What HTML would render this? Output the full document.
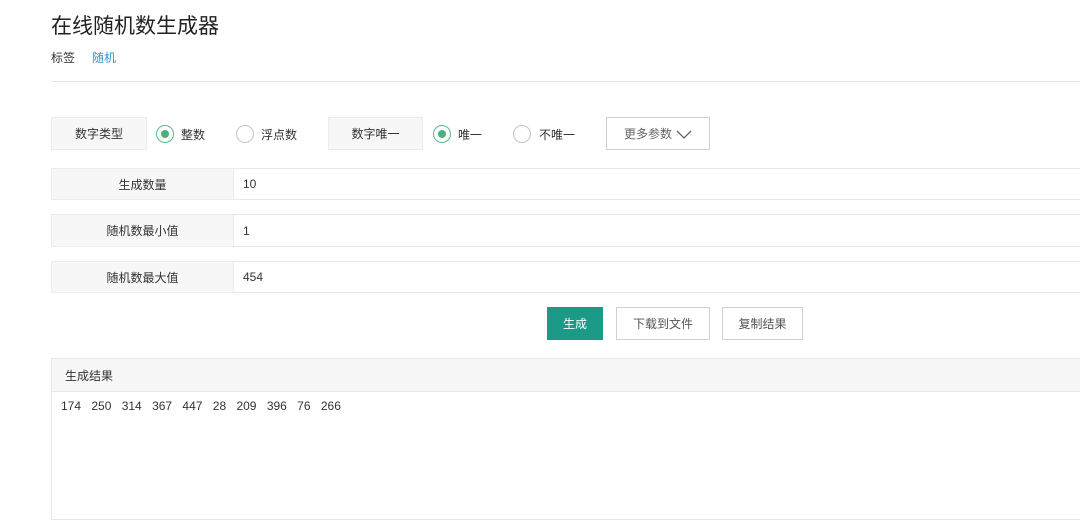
<!DOCTYPE html><html><head><meta charset="utf-8"><style>
body{margin:0;width:1080px;height:530px;background:#fff;position:relative;overflow:hidden;font-family:"Liberation Sans","Noto Sans CJK SC",sans-serif;color:#333;font-size:12px}
.a{position:absolute}
.lb{position:absolute;background:#f7f7f7;border:1px solid #ececec;box-sizing:border-box;display:flex;align-items:center;justify-content:center}
.r{position:absolute;width:18px;height:18px;border:1px solid #c4c4c4;border-radius:50%;box-sizing:border-box}
.r.on{border-color:#5cb88a}
.r.on:after{content:"";position:absolute;left:4px;top:4px;width:8px;height:8px;border-radius:50%;background:#4cb07e}
.in{position:absolute;left:233px;right:-2px;border:1px solid #e8e8e8;box-sizing:border-box;display:flex;align-items:center;padding-left:10px;border-left:none}
.btn{position:absolute;top:307px;height:33px;border:1px solid #d0d0d0;box-sizing:border-box;display:flex;align-items:center;justify-content:center;color:#555;background:#fff}
</style></head><body>
<div class="a" style="left:51px;top:10px;font-size:21px;color:#222">在线随机数生成器</div>
<div class="a" style="left:51px;top:49px">标签</div>
<div class="a" style="left:92px;top:49px;color:#2a9bd6">随机</div>
<div class="a" style="left:51px;top:81px;right:0;height:1px;background:#e5e5e5"></div>

<div class="lb" style="left:51px;top:117px;width:96px;height:33px">数字类型</div>
<div class="r on" style="left:156px;top:125px"></div><div class="a" style="left:181px;top:126px">整数</div>
<div class="r" style="left:236px;top:125px"></div><div class="a" style="left:261px;top:126px">浮点数</div>
<div class="lb" style="left:328px;top:117px;width:95px;height:33px">数字唯一</div>
<div class="r on" style="left:433px;top:125px"></div><div class="a" style="left:458px;top:126px">唯一</div>
<div class="r" style="left:513px;top:125px"></div><div class="a" style="left:539px;top:126px">不唯一</div>
<div class="btn" style="left:606px;top:117px;width:104px;height:33px;color:#666">更多参数 <svg width="16" height="10" style="margin-left:4px"><path d="M1 2 L8 9 L15 2" fill="none" stroke="#666" stroke-width="1.3"/></svg></div>

<div class="lb" style="left:51px;top:168px;width:183px;height:32px">生成数量</div><div class="in" style="top:168px;height:32px">10</div>
<div class="lb" style="left:51px;top:214px;width:183px;height:33px">随机数最小值</div><div class="in" style="top:214px;height:33px">1</div>
<div class="lb" style="left:51px;top:261px;width:183px;height:32px">随机数最大值</div><div class="in" style="top:261px;height:32px">454</div>

<div class="btn" style="left:547px;width:56px;background:#1a9a87;border-color:#1a9a87;color:#fff">生成</div>
<div class="btn" style="left:616px;width:94px">下载到文件</div>
<div class="btn" style="left:722px;width:81px">复制结果</div>

<div class="a" style="left:51px;top:358px;right:-2px;height:162px;border:1px solid #e8e8e8;box-sizing:border-box">
<div style="height:32px;background:#f7f7f7;border-bottom:1px solid #e8e8e8;display:flex;align-items:center;padding-left:13px">生成结果</div>
<div style="padding:7px 0 0 9px;word-spacing:7px">174 250 314 367 447 28 209 396 76 266</div>
</div>
</body></html>
